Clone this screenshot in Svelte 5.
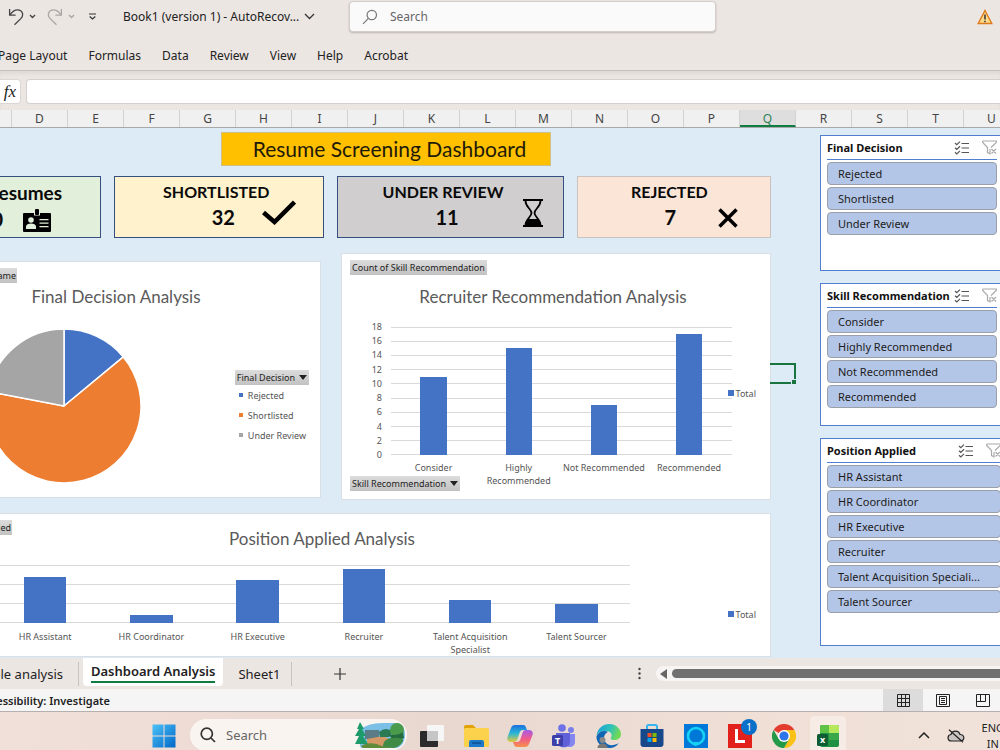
<script lang="ts">
  const menus = ['Page Layout', 'Formulas', 'Data', 'Review', 'View', 'Help', 'Acrobat']
  const columns = 'DEFGHIJKLMNOPQRSTU'.split('')
  const activeColumn = 'Q'

  const slicers = [
    { title: 'Final Decision', size: 'short', items: ['Rejected', 'Shortlisted', 'Under Review'] },
    { title: 'Skill Recommendation', size: 'medium', items: ['Consider', 'Highly Recommended', 'Not Recommended', 'Recommended'] },
    { title: 'Position Applied', size: 'tall', items: ['HR Assistant', 'HR Coordinator', 'HR Executive', 'Recruiter', 'Talent Acquisition Speciali...', 'Talent Sourcer'] },
  ]

  const skills = [
    { label: 'Consider', value: 11 },
    { label: 'Highly Recommended', value: 15 },
    { label: 'Not Recommended', value: 7 },
    { label: 'Recommended', value: 17 },
  ]
  const skillTicks = [18, 16, 14, 12, 10, 8, 6, 4, 2, 0]

  const positions = [
    { label: 'HR Assistant', value: 12 },
    { label: 'HR Coordinator', value: 2 },
    { label: 'HR Executive', value: 11 },
    { label: 'Recruiter', value: 14 },
    { label: 'Talent Acquisition Specialist', value: 6 },
    { label: 'Talent Sourcer', value: 5 },
  ]

  const decisions = [
    { label: 'Rejected', value: 7, color: '#4472c4' },
    { label: 'Shortlisted', value: 32, color: '#ed7d31' },
    { label: 'Under Review', value: 11, color: '#a5a5a5' },
  ]

  function slicePaths(data: { value: number; color: string }[]) {
    const total = data.reduce((sum, d) => sum + d.value, 0)
    let start = 0
    return data.map((d) => {
      const end = start + (d.value / total) * Math.PI * 2
      const [x1, y1] = [78 + 77 * Math.sin(start), 78 - 77 * Math.cos(start)]
      const [x2, y2] = [78 + 77 * Math.sin(end), 78 - 77 * Math.cos(end)]
      const large = end - start > Math.PI ? 1 : 0
      start = end
      return { color: d.color, d: `M78 78L${x1} ${y1}A77 77 0 ${large} 1 ${x2} ${y2}Z` }
    })
  }

  const slices = slicePaths(decisions)
</script>

<div class="window">
  <header class="titlebar">
    <div class="quick">
      <button class="icon-btn" aria-label="Undo">
        <svg width="16" height="18" viewBox="0 0 16 18" fill="none" stroke="#444" stroke-width="1.3"><path d="M1.6 1v6.2h6M1.9 6.9C4.5 3 7 1.8 9.6 1.8c5 0 6.600 5.400 3.200 8.800L6.500 16.800" /></svg>
      </button>
      <button class="icon-btn" aria-label="Undo history">
        <svg width="7" height="5" viewBox="0 0 7 5" fill="none" stroke="#444" stroke-width="1.400"><path d="M1 1l2.500 2.500L6 1" /></svg>
      </button>
      <button class="icon-btn redo" aria-label="Redo">
        <svg width="16" height="18" viewBox="0 0 16 18" fill="none" stroke="#aaa6a4" stroke-width="1.300"><path d="M14.400 1v6.200h-6M14.100 6.900C11.500 3 9 1.800 6.400 1.800c-5 0-6.600 5.400-3.200 8.800l6.300 6.200" /></svg>
      </button>
      <button class="icon-btn" aria-label="Redo history">
        <svg width="7" height="5" viewBox="0 0 7 5" fill="none" stroke="#aaa6a4" stroke-width="1.400"><path d="M1 1l2.500 2.500L6 1" /></svg>
      </button>
      <button class="icon-btn customize" aria-label="Customize toolbar">
        <svg width="9" height="8" viewBox="0 0 9 8" fill="none" stroke="#333" stroke-width="1.200"><path d="M1 1h7M1.700 3.500l2.800 2.500 2.800-2.500" /></svg>
      </button>
    </div>
    <button class="doc-name">
      Book1 (version 1) - AutoRecov...
      <svg width="11" height="7" viewBox="0 0 11 7" fill="none" stroke="#333" stroke-width="1.300"><path d="M1 1l4.500 4.500L10 1" /></svg>
    </button>
    <label class="search">
      <svg width="16" height="16" viewBox="0 0 16 16" fill="none" stroke="#777" stroke-width="1.200"><circle cx="9.800" cy="6" r="4.700" /><path d="M6.400 9.400L1 14.800" /></svg>
      <input type="text" placeholder="Search" aria-label="Search" />
    </label>
    <svg class="warning" width="16" height="16" viewBox="0 0 16 16"><path d="M8 1.500L14.800 14.500H1.200Z" fill="#fbd98a" stroke="#e07b1c" stroke-width="1.400" /><path d="M8 5.500v5M8 11.700v1.500" stroke="#333" stroke-width="1.500" /></svg>
  </header>

  <nav class="ribbon">
    {#each menus as menu}
      <button>{menu}</button>
    {/each}
  </nav>

  <div class="formula">
    <button class="fx">fx</button>
    <input type="text" aria-label="Formula bar" />
  </div>

  <div class="columns">
    <span class="column first"></span>
    {#each columns as column}
      <span class="column" class:active={column === activeColumn}>{column}</span>
    {/each}
  </div>

  <main class="sheet">
    <div class="board">
      <h1>Resume Screening Dashboard</h1>

      <div class="cards">
        <section class="card total">
          <h2>Total Resumes</h2>
          <div class="total-row">
            <strong>50</strong>
            <svg width="28" height="24" viewBox="0 0 28 24"><path d="M1 4h10v2.500h6V4h10a1 1 0 0 1 1 1v17a1 1 0 0 1-1 1H1a1 1 0 0 1-1-1V5a1 1 0 0 1 1-1z" /><rect x="12" width="4" height="6" rx="1" /><g fill="#e2efda"><circle cx="8" cy="11" r="2.800" /><path d="M3 20v-2.500c0-4 10-4 10 0V20zM16.500 10h9v1.300h-9zM16.500 13.500h9v1.300h-9zM16.500 17h9v1.300h-9z" /></g></svg>
          </div>
        </section>
        <section class="card shortlisted">
          <h2>SHORTLISTED</h2>
          <strong>32</strong>
          <svg width="34" height="25" viewBox="0 0 34 25"><path d="M1.500 12.500L12.500 22 32.500 2" fill="none" stroke="#000" stroke-width="4.500" /></svg>
        </section>
        <section class="card review">
          <h2>UNDER REVIEW</h2>
          <strong>11</strong>
          <svg width="20" height="28" viewBox="0 0 20 28"><path d="M0 0h20v2H0zM0 26h20v2H0zM2 26c0-3 1.500-4.500 3-6h10c1.500 1.500 3 3 3 6z" /><path d="M2.500 2c0 6 6 8 6 12s-6 6-6 12M17.500 2c0 6-6 8-6 12s6 6 6 12" fill="none" stroke="#000" stroke-width="1.800" /></svg>
        </section>
        <section class="card rejected">
          <h2>REJECTED</h2>
          <strong>7</strong>
          <svg width="20" height="20" viewBox="0 0 20 20"><path d="M1.500 1.500l17 17M18.500 1.500l-17 17" stroke="#000" stroke-width="3.500" /></svg>
        </section>
      </div>

      <div class="charts">
        <section class="chart pie-chart">
          <button class="field clipped"><span>Count of Name</span></button>
          <h3>Final Decision Analysis</h3>
          <div class="pie-body">
            <svg class="pie" width="156" height="156" viewBox="0 0 156 156">
              {#each slices as slice}
                <path d={slice.d} fill={slice.color} stroke="#fff" stroke-width="1.500" stroke-linejoin="round" />
              {/each}
            </svg>
            <div class="pie-legend">
              <button class="field">Final Decision <i class="arrow"></i></button>
              <ul>
                {#each decisions as decision}
                  <li><i class="dot" style="background: {decision.color}"></i>{decision.label}</li>
                {/each}
              </ul>
            </div>
          </div>
        </section>

        <section class="chart skill-chart">
          <button class="field">Count of Skill Recommendation</button>
          <h3>Recruiter Recommendation Analysis</h3>
          <div class="skill-body">
            <div class="ticks">
              {#each skillTicks as tick}
                <span>{tick}</span>
              {/each}
            </div>
            <div class="plot-wrap">
              <div class="plot skill-plot">
                {#each skills as skill}
                  <div class="slot"><div class="bar" style="height: {(skill.value / 18) * 100}%"></div></div>
                {/each}
              </div>
              <div class="labels">
                {#each skills as skill}
                  <span>{skill.label}</span>
                {/each}
              </div>
            </div>
            <div class="legend"><i class="square"></i>Total</div>
          </div>
          <button class="field bottom">Skill Recommendation <i class="arrow"></i></button>
          <div class="selection"><i></i></div>
        </section>
      </div>

      <section class="chart position-chart">
        <button class="field clipped"><span>Count of Position Applied</span></button>
        <h3>Position Applied Analysis</h3>
        <div class="position-body">
          <div class="plot-wrap">
            <div class="plot position-plot">
              {#each positions as position}
                <div class="slot"><div class="bar" style="height: {(position.value / 15) * 100}%"></div></div>
              {/each}
            </div>
            <div class="labels">
              {#each positions as position}
                <span>{position.label}</span>
              {/each}
            </div>
          </div>
          <div class="legend"><i class="square"></i>Total</div>
        </div>
      </section>
    </div>

    <aside class="slicers">
      {#each slicers as slicer}
        <section class="slicer {slicer.size}">
          <header>
            <h4>{slicer.title}</h4>
            <button class="icon-btn" aria-label="Multi-select">
              <svg width="16" height="14" viewBox="0 0 16 14" fill="none" stroke="#555" stroke-width="1.200"><path d="M7.500 2.500H15M7.500 7H15M7.500 11.500H15M1 2l1.800 1.700L6 .6M1 6.700l1.800 1.700L6 5.300M1 11.300l1.800 1.700L6 9.900" /></svg>
            </button>
            <button class="icon-btn clear" aria-label="Clear filter">
              <svg width="15" height="15" viewBox="0 0 15 15" fill="none" stroke="#aaa" stroke-width="1.200"><path d="M.7 1h13.600v1.500L9 7.500M.7 1v1.500L5.500 7.500v5l2.500 1.200V9M9.500 9l4.500 4.500M14 9l-4.500 4.500" /></svg>
            </button>
          </header>
          {#each slicer.items as item}
            <button class="slicer-item">{item}</button>
          {/each}
        </section>
      {/each}
    </aside>
  </main>

  <div class="tabs">
    <button class="tab sample"><span>Sample analysis</span></button>
    <button class="tab current"><span>Dashboard Analysis</span></button>
    <button class="tab plain">Sheet1</button>
    <button class="tab add" aria-label="New sheet">
      <svg width="12" height="12" viewBox="0 0 12 12" stroke="#333" stroke-width="1.200"><path d="M6 0v12M0 6h12" /></svg>
    </button>
    <svg class="grip" width="3" height="13" viewBox="0 0 3 13" fill="#444"><circle cx="1.500" cy="2" r="1.200" /><circle cx="1.500" cy="6.500" r="1.200" /><circle cx="1.500" cy="11" r="1.200" /></svg>
    <div class="scroll">
      <svg width="7" height="10" viewBox="0 0 7 10" fill="#666"><path d="M7 0v10L0 5z" /></svg>
      <div class="thumb"></div>
    </div>
  </div>

  <div class="status">
    <span class="access"><span>Accessibility: Investigate</span></span>
    <button class="view on" aria-label="Normal view">
      <svg width="13" height="13" viewBox="0 0 13 13" fill="none" stroke="#222"><path d="M.5.5h12v12H.5zM4.500.5v12M8.500.5v12M.5 4.500h12M.5 8.500h12" /></svg>
    </button>
    <button class="view" aria-label="Page layout view">
      <svg width="14" height="13" viewBox="0 0 14 13" fill="none" stroke="#222"><path d="M.5.5h13v12H.5zM3.500 2.500h7v8h-7zM5 4.500h4M5 6.500h4M5 8.500h4" /></svg>
    </button>
    <button class="view" aria-label="Page break view">
      <svg width="14" height="13" viewBox="0 0 14 13" fill="none" stroke="#222"><path d="M.5.5h13v12H.5zM4.500.5v7M9.500.5v7M.5 7.500h9" /></svg>
    </button>
  </div>

  <footer class="taskbar">
    <button class="icon-btn" aria-label="Start">
      <svg width="24" height="24" viewBox="0 0 24 24"><defs><linearGradient id="win" x2="1" y2="1"><stop stop-color="#4cc2f8" /><stop offset="1" stop-color="#0067c8" /></linearGradient></defs><path fill="url(#win)" d="M.5.5h11v11H.5zM12.500.5h11v11h-11zM.5 12.500h11v11H.5zM12.500 12.500h11v11h-11z" /></svg>
    </button>
    <label class="task-search">
      <svg width="16" height="16" viewBox="0 0 16 16" fill="none" stroke="#333" stroke-width="1.700"><circle cx="6.800" cy="6.800" r="5.600" /><path d="M11 11l4 4" /></svg>
      <input type="text" placeholder="Search" aria-label="Search Windows" />
      <svg width="50" height="28" viewBox="0 0 50 28"><path d="M9 6c8-5 22-4 32-4 6 0 9 5 9 12s-4 13-10 13H6C3 20 3 10 9 6z" fill="#79bfe6" /><path d="M10 9h14v9H10z" fill="#5b7c86" /><path d="M12 18l16-3 8 4-8 6H12z" fill="#d39a68" /><path d="M24 11q7-6 14 0l-4 5h-9z" fill="#2c7a54" /><circle cx="42" cy="9" r="7" fill="#4b9b4c" /><path d="M33 13c5 2 11 1 15-2l1 6-9 4z" fill="#246b3f" /><path d="M28 26c0-7 5-9 10-9 5-1 11 0 10 3-2 4-6 7-10 7z" fill="#3f8a45" /><path d="M5 1l4 7H7l4 7H8l5 8H0l4-8H0l4-7H2z" fill="#1e9a6b" /><path d="M6 25c6-4 14-3 18-1s8 1 12 3H8z" fill="#5f8b3b" /></svg>
    </label>

    <div class="apps">
      <button aria-label="Task view">
        <svg width="24" height="24" viewBox="0 0 24 24"><rect x="7" y="1" width="17" height="16" rx="1" fill="#f6f6f6" /><rect y="7" width="18" height="16" rx="1" fill="#2b2b2b" /><path d="M7 7h11v10H7z" fill="#c6c6c6" /></svg>
      </button>
      <button aria-label="File Explorer">
        <svg width="25" height="24" viewBox="0 0 25 24"><path d="M0 3a2 2 0 0 1 2-2h7l3 3v4H0z" fill="#e2a20c" /><rect y="4" width="25" height="19" rx="1.500" fill="#fcd14b" /><path d="M5 23v-5a2 2 0 0 1 2-2h11a2 2 0 0 1 2 2v5z" fill="#1c79c9" /><path d="M8 19h9" stroke="#0b4f91" stroke-width="1.500" /></svg>
      </button>
      <button aria-label="Copilot">
        <svg width="26" height="24" viewBox="0 0 26 24"><defs><linearGradient id="coa" x2="0" y2="1"><stop stop-color="#1b6fe0" /><stop offset=".5" stop-color="#2bb8d4" /><stop offset="1" stop-color="#e7c93a" /></linearGradient><linearGradient id="cob" x2="0" y2="1"><stop stop-color="#a35be8" /><stop offset=".5" stop-color="#ee5a8c" /><stop offset="1" stop-color="#f7914a" /></linearGradient></defs><path d="M8 1h8c2 0 2.500 1 3 2.500L20 6h-4c-2 0-3 1-3.500 3l-2 6c-.5 2-1.500 3-3.500 3H4c-3 0-4.500-2-3.500-5L4 4c.7-2 2-3 4-3z" fill="url(#coa)" /><path d="M18 23h-8c-2 0-2.500-1-3-2.500L6 18h4c2 0 3-1 3.500-3l2-6c.5-2 1.500-3 3.500-3h3c3 0 4.500 2 3.500 5L22 20c-.7 2-2 3-4 3z" fill="url(#cob)" /></svg>
      </button>
      <button aria-label="Teams">
        <svg width="24" height="24" viewBox="0 0 24 24"><circle cx="10" cy="4" r="3.800" fill="#6e72e8" /><circle cx="19" cy="6" r="3" fill="#7c7fea" /><path d="M13 10h10v8c0 6-8 6-10 3z" fill="#8286ee" /><path d="M4 9h14v9c0 7-12 7-14 0z" fill="#5e61d8" /><rect y="11" width="11" height="11" rx="1.500" fill="#3d3fa8" /><text x="5.500" y="20" text-anchor="middle">T</text></svg>
      </button>
      <button aria-label="Edge">
        <svg width="25" height="24" viewBox="0 0 25 24"><defs><linearGradient id="edg" x2="1" y2=".3"><stop stop-color="#1c9be0" /><stop offset=".6" stop-color="#2fc2b8" /><stop offset="1" stop-color="#72d957" /></linearGradient></defs><path d="M.5 11C2 4 7 0 13 0c7 0 12 5 12 10 0 4-3 6-7 6-3 0-4-1-3-2.500 2-3-.5-6.500-5-6.500-4 0-7 1-9.500 4z" fill="url(#edg)" /><path d="M.5 12C3 7 9 6 12 8c-4 2-5 6-3 9.500 2 4 8 5 14 1.500-3 4-6 5-10 5C5 24 0 18 .5 12z" fill="#1265b5" /><circle cx="6.500" cy="16" r="3" fill="#8a8a8a" /><path d="M1.500 24c0-6 10-6 10 0z" fill="#777" /></svg>
      </button>
      <button aria-label="Microsoft Store">
        <svg width="24" height="24" viewBox="0 0 24 24"><path d="M7 6V2.500A1.500 1.500 0 0 1 8.500 1h7A1.500 1.500 0 0 1 17 2.500V6" fill="none" stroke="#35b6ee" stroke-width="2" /><path d="M.5 5h23v15a3 3 0 0 1-3 3h-17a3 3 0 0 1-3-3z" fill="#17488a" /><path d="M7.500 9h4v4h-4z" fill="#f25022" /><path d="M12.500 9h4v4h-4z" fill="#7fba00" /><path d="M7.500 14h4v4h-4z" fill="#00a4ef" /><path d="M12.500 14h4v4h-4z" fill="#ffb900" /></svg>
      </button>
      <button aria-label="Alexa">
        <svg width="24" height="24" viewBox="0 0 24 24"><path d="M0 0h24v24H0z" fill="#0078d7" /><circle cx="12" cy="12" r="8" fill="none" stroke="#14d2f5" stroke-width="2.600" /><path d="M10 18h4l-1.500 4h-2z" fill="#14d2f5" /></svg>
      </button>
      <button class="lens" aria-label="Launcher">
        <svg width="24" height="24" viewBox="0 0 24 24"><path d="M0 0h24v24H0z" fill="#e3211c" /><path d="M8.500 5v12.500H17" fill="none" stroke="#fff" stroke-width="3" /></svg>
        <span class="badge">1</span>
      </button>
      <button aria-label="Chrome">
        <svg width="24" height="24" viewBox="0 0 24 24"><path d="M12 12L1.600 6A12 12 0 0 1 22.400 6H12z" fill="#e33b2e" /><path d="M12 12L22.400 6A12 12 0 0 1 12 24l5.200-9z" fill="#fbc116" /><path d="M12 12l5.200 3L12 24A12 12 0 0 1 1.600 6l5.200 9z" fill="#249a49" /><path d="M12 6h10.400L17 12z" fill="#fbc116" /><circle cx="12" cy="12" r="6" fill="#fff" /><circle cx="12" cy="12" r="4.600" fill="#2f74e8" /></svg>
      </button>
      <button class="running" aria-label="Excel">
        <svg width="22" height="24" viewBox="0 0 22 24"><rect x="3" y="1" width="19" height="22" rx="2" fill="#1f9144" /><path d="M12 1h8a2 2 0 0 1 2 2v6H12z" fill="#b5e85c" /><path d="M3 3a2 2 0 0 1 2-2h7v8H3z" fill="#5ec246" /><path d="M12 9h10v7H12z" fill="#3aa84a" /><rect y="10" width="11" height="12" rx="1.500" fill="#0e5c33" /><text x="5.500" y="19" text-anchor="middle">x</text></svg>
      </button>
    </div>

    <div class="tray">
      <button class="icon-btn" aria-label="Show hidden icons">
        <svg width="12" height="7" viewBox="0 0 12 7" fill="none" stroke="#222" stroke-width="1.500"><path d="M1 6l5-5 5 5" /></svg>
      </button>
      <svg width="18" height="14" viewBox="0 0 18 14" fill="#c9c3c1" stroke="#222" stroke-width="1.200"><path d="M4.500 12C0 12 0 6 4 5.500 5 1 12 1 13 5.500c5 0 5 6.500.5 6.500zM2 .8l14 12.500" /></svg>
      <div class="lang"><span>ENG</span><span>IN</span></div>
    </div>
  </footer>
</div>

<style>
  :global(body) { margin: 0; }
  .window { display: flex; flex-direction: column; height: 100vh; overflow: hidden; background: #ece6e3; color: #222; font-family: "Noto Sans", "Open Sans", sans-serif; font-size: 12px; }
  .window *, .window { box-sizing: border-box; }
  button { padding: 0; border: none; background: none; font: inherit; color: inherit; white-space: nowrap; }
  input { min-width: 0; border: none; background: none; font: inherit; outline: none; padding: 0; }
  input::placeholder { color: #666; opacity: 1; }
  h1, h2, h3, h4, ul { margin: 0; padding: 0; font-weight: 400; list-style: none; }
  svg { display: block; flex: none; }
  .icon-btn { flex: none; }

  .titlebar { flex: none; display: flex; align-items: center; height: 33px; padding: 0 7px 0 8px; }
  .quick { display: flex; align-items: center; gap: 5px; width: 115px; flex: none; }
  .redo { margin-left: 6px; }
  .customize { margin-left: 8px; }
  .doc-name { display: flex; align-items: center; gap: 5px; width: 226px; flex: none; }
  .search { display: flex; align-items: center; gap: 12px; flex: 0 1 367px; height: 31px; padding: 0 12px; background: #fbfafa; border: 1px solid #d4cecb; border-radius: 4px; box-shadow: 0 1px 2px #bbb4b1; }
  .search input { flex: 1; }
  .warning { margin-left: auto; }

  .ribbon { flex: none; display: flex; align-items: center; gap: 21px; height: 38px; padding-top: 8px; border-bottom: 1px solid #c8c2bf; }
  .ribbon button:first-child { margin-left: -2px; }
  .formula { flex: none; display: flex; gap: 5px; height: 39px; padding: 8px 0 6px; box-shadow: inset 0 3px 3px #e0dad7; }
  .formula input { flex: 1; background: #fff; border: 1px solid #d5d0ce; border-right: none; border-radius: 4px 0 0 4px; }
  .fx { width: 21px; background: #fff; border: 1px solid #dcd7d5; border-left: none; border-radius: 0 4px 4px 0; font: italic 17px "Liberation Serif", serif; color: #222; }

  .columns { flex: none; display: flex; height: 18px; overflow: hidden; background: #f0f0f0; border-bottom: 1px solid #a9a9a9; }
  .column { flex: none; width: 56px; border-right: 1px solid #d2d2d2; text-align: center; line-height: 17px; color: #444; }
  .column.first { width: 12px; }
  .column.active { background: #dedede; color: #2e8257; border-bottom: 2px solid #107c41; }

  .sheet { flex: 1; min-height: 0; display: grid; grid-template-columns: minmax(0, 1fr) 180px; overflow: hidden; background: #ddebf6; }
  .board { padding: 4px 49px 0 0; min-width: 0; }
  h1 { width: 330px; margin: 0 auto; background: #ffc000; border: 1px solid #cfc08a; font: 21px/32px Lato, sans-serif; color: #1e1a08; text-align: center; padding-left: 8px; }

  .cards { display: grid; grid-template-columns: 101fr 210fr 226fr 194fr; gap: 13px; margin-top: 10px; }
  .card { display: grid; grid-template: 26px 34px / 1fr auto 1fr; height: 62px; border: 1px solid #35507e; color: #0a0a0a; font-family: Lato, sans-serif; }
  .card h2 { grid-area: 1 / 1 / 2 / 4; padding-right: 8px; text-align: center; font-size: 16px; line-height: 30px; font-weight: 700; white-space: nowrap; }
  .card strong { grid-area: 2 / 2; font-size: 20px; line-height: 28px; }
  .card svg { grid-area: 1 / 3 / 3 / 4; align-self: end; }
  .total { display: block; overflow: hidden; background: #e2efda; border-left: none; }
  .card.total h2 { display: flex; justify-content: flex-end; padding-right: 38px; font-size: 19px; line-height: 32px; height: 28px; }
  .total-row { display: flex; justify-content: flex-end; gap: 20px; padding-right: 49px; }
  .shortlisted { padding-left: 8px; background: #fff2cc; }
  .card.shortlisted h2 { padding-right: 14px; }
  .shortlisted svg { margin: 0 0 12px 27px; }
  .review { padding-right: 7px; background: #d0cece; }
  .review svg { margin: 0 0 10px 64px; }
  .rejected { padding-right: 7px; background: #fbe5d6; border-color: #c9c2bf; }
  .card.rejected h2 { padding-right: 2px; }
  .rejected svg { margin: 0 0 9px 42px; }

  .charts { display: grid; grid-template-columns: 321fr 430fr; gap: 20px; margin-top: 15px; }
  .chart { background: #fff; border: 1px solid #d9dfe5; font-family: "Noto Sans", sans-serif; font-size: 9px; color: #555; min-width: 0; }
  .chart h3 { font: 17px/22px Lato, sans-serif; color: #5a5a5a; text-align: center; white-space: nowrap; }
  .field { display: flex; align-items: center; gap: 4px; height: 15px; padding: 0 2px; background: linear-gradient(#dcdcdc, #c2c2c2); font-size: 9px; color: #222; }
  .arrow { border: 4px solid transparent; border-top: 5px solid #222; border-bottom: none; }
  .clipped { justify-content: flex-end; padding: 0 1px 0 0; overflow: hidden; }

  .pie-chart { height: 237px; margin-top: 8px; border-left: none; overflow: hidden; }
  .pie-chart .field.clipped { width: 17px; margin-top: 6px; }
  .pie-chart h3 { margin-top: 3px; padding-right: 88px; }
  .pie-body { display: flex; justify-content: space-between; padding-right: 11px; margin-top: 20px; }
  .pie { margin-left: -14px; }
  .pie-legend { padding-top: 42px; }
  .pie-legend ul { padding: 0 0 0 4px; }
  .pie-legend li { display: flex; align-items: center; gap: 5px; height: 20px; }
  .dot { width: 4px; height: 4px; }

  .skill-chart { position: relative; height: 247px; padding: 6px 14px 0 8px; }
  .skill-chart h3 { margin-top: 11px; }
  .skill-body { display: flex; margin-top: 12px; }
  .ticks { display: flex; flex-direction: column; justify-content: space-between; width: 32px; height: 142px; margin-right: 9px; text-align: right; line-height: 14px; }
  .plot-wrap { flex: 1; min-width: 0; }
  .plot { display: flex; }
  .slot { flex: 1; display: flex; align-items: flex-end; justify-content: center; }
  .bar { background: #4472c4; }
  .skill-plot { height: 128px; margin-top: 7px; background: repeating-linear-gradient(to top, #d9d9d9 0 1px, transparent 1px calc((100% - 1px) / 9)); }
  .skill-plot .bar { width: 31%; }
  .labels { display: flex; line-height: 13px; }
  .labels span { flex: 1; min-width: 0; text-align: center; }
  .skill-body .labels { margin-top: 6px; }
  .legend { display: flex; align-items: center; gap: 2px; }
  .square { width: 6px; height: 6px; background: #4472c4; }
  .skill-body .legend { height: 14px; margin: 66px 0 0 -4px; }
  .bottom { margin-top: -11px; }
  .selection { position: absolute; left: 100%; top: 109px; width: 26px; height: 21px; border: 2px solid #1a7440; border-left: none; }
  .selection i { position: absolute; right: -3px; bottom: -3px; width: 6px; height: 6px; background: #1a7440; border: 1px solid #ddebf6; }

  .position-chart { margin-top: 13px; border-left: none; }
  .position-chart .field.clipped { width: 12px; margin-top: 6px; }
  .position-chart h3 { padding-right: 126px; margin-top: -7px; }
  .position-body { display: flex; padding-right: 14px; margin-top: 15px; }
  .position-body .plot-wrap { flex: 0 0 85%; padding-right: 5px; margin-left: -8px; }
  .position-plot { height: 58px; background: repeating-linear-gradient(to top, #d9d9d9 0 1px, transparent 1px 19px); }
  .position-plot .bar { width: 40%; }
  .position-body .labels { margin-top: 7px; }
  .position-body .labels span { padding: 0 12px; }
  .position-body .legend { margin: 42px 0 0 auto; height: 14px; }

  .slicers { display: flex; flex-direction: column; gap: 12px; padding-top: 7px; min-width: 0; }
  .slicer { flex: none; width: 184px; padding: 0 6px; background: #fff; border: 1px solid #4f7fce; color: #1c1c1c; font-size: 11px; }
  .slicer header { display: flex; align-items: center; height: 24px; margin-bottom: 2px; border-bottom: 1px solid #4f7fce; }
  .slicer h4 { flex: 1; min-width: 0; font-size: 11px; font-weight: 700; color: #111; white-space: nowrap; }
  .clear { margin-left: 12px; }
  .slicer-item { display: block; width: 100%; height: 23px; margin-bottom: 2px; padding: 0 10px; text-align: left; background: #b4c6e7; border: 1px solid #9b9fa8; border-radius: 4px; }
  .short { height: 136px; }
  .medium { height: 143px; }
  .tall { width: 188px; height: 208px; }

  .tabs { flex: none; display: flex; align-items: center; height: 31px; font-size: 13px; }
  .tab { height: 24px; }
  .sample { display: flex; align-items: center; justify-content: flex-end; width: 79px; padding-right: 15px; overflow: hidden; border-right: 1px solid #c9c3c0; }
  .current { align-self: flex-start; height: 28px; margin-left: 4px; padding: 0 8px; background: #fff; border-radius: 0 0 4px 4px; font-weight: 600; }
  .current span { display: block; border-bottom: 2px solid #107c41; line-height: 20px; }
  .plain { margin-left: 4px; padding: 0 11px; border-right: 1px solid #c9c3c0; }
  .add { margin-left: 42px; }
  .grip { margin-left: auto; }
  .scroll { display: flex; align-items: center; gap: 5px; width: 344px; height: 15px; margin-left: 15px; padding-left: 4px; background: #f7f5f4; border-radius: 8px 0 0 8px; }
  .thumb { flex: 1; height: 9px; background: #707070; border-radius: 5px 0 0 5px; }

  .status { flex: none; display: flex; align-items: center; height: 23px; background: #f5f5f5; border-bottom: 1px solid #b5b0ae; font-size: 11px; font-weight: 600; }
  .access { display: flex; justify-content: flex-end; width: 110px; margin-right: auto; overflow: hidden; white-space: nowrap; }
  .view { display: flex; align-items: center; justify-content: center; width: 40px; height: 22px; }
  .view.on { background: #dcdcdc; }
  .view:last-child { margin-right: -3px; }

  .taskbar { flex: none; display: flex; height: 38px; padding-left: 152px; overflow: hidden; background: linear-gradient(90deg, #f1dfd9, #e9d8d0 45%, #f0dfd5 75%, #f0e2da); }
  .taskbar > * { height: 47px; flex: none; }
  .taskbar .task-search { display: flex; align-items: center; gap: 10px; width: 217px; height: 32px; margin: 7px 0 0 14px; padding: 0 2px 0 10px; background: #faf4f1; border-radius: 16px; font-size: 13px; }
  .task-search input { flex: 1; }
  .apps { display: flex; align-items: center; margin-left: 3px; }
  .apps button { position: relative; display: flex; align-items: center; justify-content: center; width: 44px; height: 40px; }
  .apps .running { width: 36px; margin: 0 4px; background: #f7ebe6; border-radius: 4px; }
  .apps text { fill: #fff; font: 700 9px "Noto Sans", sans-serif; }
  .badge { position: absolute; top: 3px; right: 5px; width: 16px; height: 16px; border-radius: 8px; background: #0a6fc8; color: #fff; font-size: 10px; line-height: 16px; }
  .tray { display: flex; align-items: center; gap: 17px; margin-left: auto; margin-right: -4px; font-size: 11px; }
  .lang { display: flex; flex-direction: column; align-items: center; justify-content: center; line-height: 16px; }
</style>
